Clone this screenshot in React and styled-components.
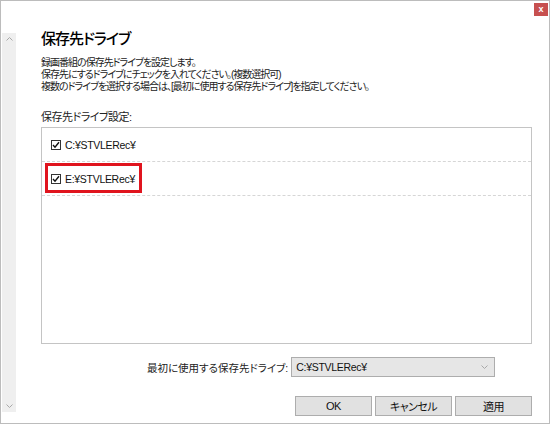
import styled, { createGlobalStyle } from 'styled-components';

const GlobalStyle = createGlobalStyle`
  html, body {
    margin: 0;
    padding: 0;
    background: #fff;
  }
  body {
    font-family: "Liberation Sans", "Noto Sans CJK JP", sans-serif;
    color: #111;
  }
`;

const drives = [
  { path: 'C:¥STVLERec¥', checked: true, marked: false },
  { path: 'E:¥STVLERec¥', checked: true, marked: true },
];

const Window = styled.div`
  box-sizing: border-box;
  width: 550px;
  height: 424px;
  border: 1px solid #bcbcbc;
  background: #fff;
  display: flex;
`;

const ScrollTrack = styled.div`
  width: 14px;
  margin: 32px 0 11px 1px;
  background: #efefef;
  display: flex;
  flex-direction: column;
  justify-content: space-between;
  align-items: center;
  padding: 4px 0;
  box-sizing: border-box;
`;

const Content = styled.div`
  flex: 1;
  display: flex;
  flex-direction: column;
  padding: 0 1px 7px 25px;
`;

const Header = styled.div`
  display: flex;
  justify-content: space-between;
  align-items: flex-start;
`;

const Title = styled.h1`
  margin: 28px 0 0 0;
  font-size: 15px;
  line-height: 20px;
  font-weight: 500;
  letter-spacing: -1px;
  font-feature-settings: "palt";
  color: #000;
`;

const CloseButton = styled.div`
  width: 14px;
  height: 13px;
  margin-top: 2px;
  background: #c75050;
  color: #fff;
  font-size: 9px;
  font-weight: bold;
  line-height: 12px;
  text-align: center;
`;

const Description = styled.p`
  margin: 8px 0 0 0;
  font-size: 10px;
  line-height: 12px;
  letter-spacing: -1px;
  font-feature-settings: "palt";
  color: #222;
`;

const SectionLabel = styled.div`
  margin: 17px 0 0 0;
  font-size: 11px;
  line-height: 14px;
  letter-spacing: -0.5px;
  font-feature-settings: "palt";
  color: #222;
`;

const DriveList = styled.div`
  margin: 3px 16px 0 0;
  height: 217px;
  box-sizing: border-box;
  border: 1px solid #c4c4c4;
`;

const DriveRow = styled.div`
  position: relative;
  height: 33px;
  display: flex;
  align-items: center;
  gap: 4px;
  padding-left: 9px;
  border-bottom: 1px dashed #d6d6d6;
  font-size: 10.5px;
  letter-spacing: -0.3px;
  color: #111;
`;

const Highlight = styled.div`
  position: absolute;
  left: 3px;
  top: 1px;
  width: 97px;
  height: 30px;
  box-sizing: border-box;
  border: 3px solid #e0141e;
`;

const Box = styled.span`
  width: 10px;
  height: 10px;
  box-sizing: border-box;
  border: 1px solid #333;
  background: #fff;
  display: inline-flex;
  align-items: center;
  justify-content: center;
`;

const FirstDriveRow = styled.div`
  display: flex;
  align-items: center;
  gap: 3px;
  margin: 13px 0 0 106px;
  font-size: 10.5px;
  font-feature-settings: "palt";
  color: #222;
`;

const Combo = styled.div`
  width: 204px;
  height: 20px;
  box-sizing: border-box;
  border: 1px solid #adadad;
  background: #e6e6e6;
  display: flex;
  align-items: center;
  justify-content: space-between;
  padding: 0 6px 0 4px;
  font-size: 10.5px;
  letter-spacing: -0.3px;
  color: #111;
`;

const ButtonBar = styled.div`
  display: flex;
  justify-content: flex-end;
  gap: 3px;
  margin: auto 16px 0 0;
`;

const Button = styled.button`
  width: 77px;
  height: 20px;
  box-sizing: border-box;
  border: 1px solid #adadad;
  background: #e1e1e1;
  font-family: "Liberation Sans", "Noto Sans CJK JP", sans-serif;
  font-size: 11px;
  letter-spacing: -0.5px;
  font-feature-settings: "palt";
  color: #111;
  padding: 0;
`;

const Chevron = ({ up }) => (
  <svg width="7" height="4" viewBox="0 0 7 4">
    <path
      d={up ? 'M0.5 3.5 L3.5 0.5 L6.5 3.5' : 'M0.5 0.5 L3.5 3.5 L6.5 0.5'}
      fill="none"
      stroke="#a8a8a8"
      strokeWidth="1"
    />
  </svg>
);

const CheckBox = () => (
  <Box>
    <svg width="8" height="8" viewBox="0 0 8 8">
      <path d="M1 4 L3 6.2 L7 1.2" fill="none" stroke="#111" strokeWidth="1.4" />
    </svg>
  </Box>
);

const App = () => {
  return (
    <>
      <GlobalStyle />
      <Window>
        <ScrollTrack>
          <Chevron up />
          <Chevron />
        </ScrollTrack>
        <Content>
          <Header>
            <Title>保存先ドライブ</Title>
            <CloseButton>x</CloseButton>
          </Header>
          <Description>
            録画番組の保存先ドライブを設定します。
            <br />
            保存先にするドライブにチェックを入れてください。(複数選択可)
            <br />
            複数のドライブを選択する場合は、[最初に使用する保存先ドライブ]を指定してください。
          </Description>
          <SectionLabel>保存先ドライブ設定:</SectionLabel>
          <DriveList>
            {drives.map(d => (
              <DriveRow key={d.path}>
                {d.checked && <CheckBox />}
                {d.path}
                {d.marked && <Highlight />}
              </DriveRow>
            ))}
          </DriveList>
          <FirstDriveRow>
            最初に使用する保存先ドライブ:
            <Combo>
              C:¥STVLERec¥
              <Chevron />
            </Combo>
          </FirstDriveRow>
          <ButtonBar>
            <Button>OK</Button>
            <Button>キャンセル</Button>
            <Button>適用</Button>
          </ButtonBar>
        </Content>
      </Window>
    </>
  );
};

export default App;
